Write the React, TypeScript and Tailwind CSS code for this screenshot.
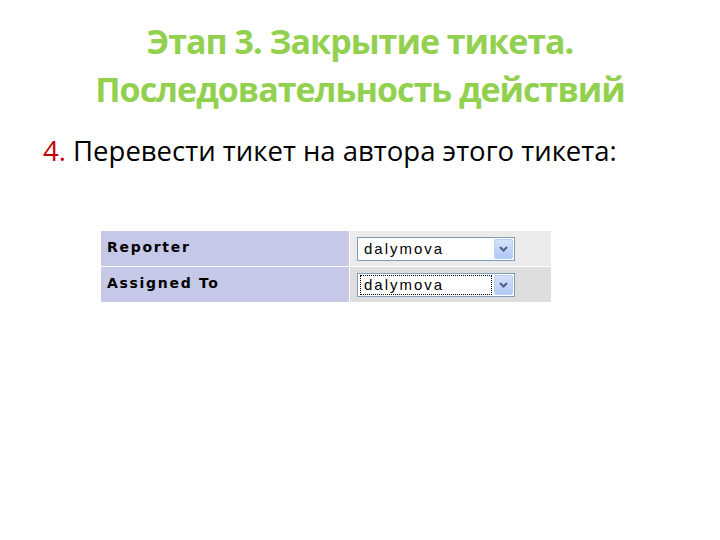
import React from "react";

function SelectBox({ value, focused }: { value: string; focused?: boolean }) {
  return (
    <div className="flex h-[24px] w-[158px] items-center border border-[#7f9db9] bg-white pl-[2px] pr-[1px]">
      <div
        className={
          "flex h-[20px] flex-1 items-center pl-[3px] text-[15px] leading-none tracking-[2px] text-black " +
          (focused ? "border border-dotted border-black" : "border border-transparent")
        }
        style={{ fontFamily: '"Liberation Sans", Arial, sans-serif' }}
      >
        {value}
      </div>
      <div className="ml-[2px] flex h-[20px] w-[19px] items-center justify-center rounded-[2px] border border-[#b9d0f5] bg-gradient-to-b from-[#d6e2fc] to-[#b1c8f6]">
        <svg width="9" height="6" viewBox="0 0 9 6">
          <path d="M1 1 L4.5 4.5 L8 1" fill="none" stroke="#4d6185" strokeWidth="2" />
        </svg>
      </div>
    </div>
  );
}

export default function App() {
  const rows = [
    { label: "Reporter", value: "dalymova", bg: "bg-[#ebebeb]", focused: false },
    { label: "Assigned To", value: "dalymova", bg: "bg-[#dedede]", focused: true },
  ];

  return (
    <div className="h-[540px] w-[720px] bg-white" style={{ fontFamily: '"Open Sans", "Noto Sans", sans-serif' }}>
      <h1 className="pt-[17px] text-center text-[34px] font-bold leading-[48px] tracking-[-1px] text-[#92d050]">
        Этап 3. Закрытие тикета.
        <br />
        Последовательность действий
      </h1>
      <p className="mt-[21px] pl-[43px] text-[27.5px] leading-[34px] text-black">
        <span className="text-[#c00000]">4.</span> Перевести тикет на автора этого тикета:
      </p>

      <div className="ml-[101px] mt-[63px] flex w-[450px] flex-col gap-[1px]">
        {rows.map((r) => (
          <div key={r.label} className="flex h-[35px]">
            <div
              className="flex w-[248px] items-center bg-[#c6c8e7] pb-[2px] pl-[6px] text-[14px] font-bold tracking-[1.7px] text-black"
              style={{ fontFamily: '"DejaVu Sans", Verdana, sans-serif' }}
            >
              {r.label}
            </div>
            <div className={"ml-[1px] flex flex-1 items-center pl-[7px] " + r.bg}>
              <SelectBox value={r.value} focused={r.focused} />
            </div>
          </div>
        ))}
      </div>
    </div>
  );
}
